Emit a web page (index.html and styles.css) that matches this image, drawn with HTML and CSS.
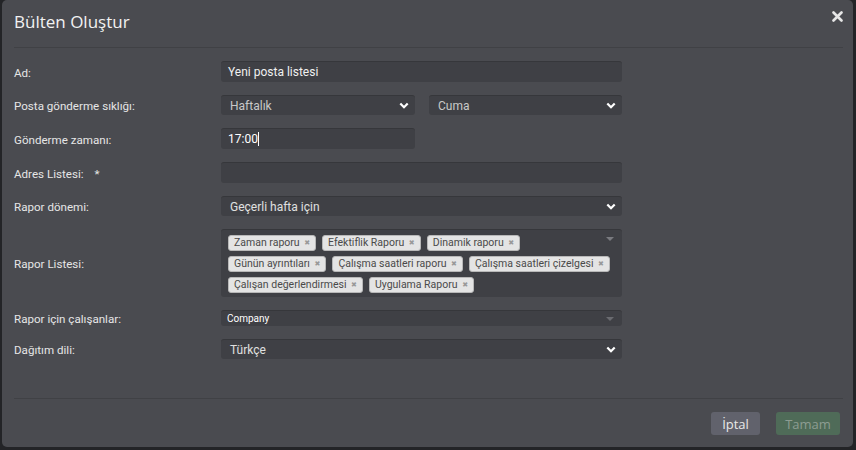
FILE: index.html
```html
<!DOCTYPE html>
<html lang="tr">
<head>
<meta charset="utf-8">
<title>Bülten Oluştur</title>
<link rel="stylesheet" href="styles.css">
</head>
<body>
<div class="modal">
  <div class="header">
    <h1 class="title">Bülten Oluştur</h1>
    <button class="close" aria-label="Kapat">
      <svg width="11" height="11" viewBox="0 0 11 11"><path d="M1.5 1.5L9.5 9.5M9.5 1.5L1.5 9.5" stroke="#e6e6e6" stroke-width="2.6" stroke-linecap="round"/></svg>
    </button>
  </div>
  <div class="body">
    <div class="row">
      <label class="label">Ad:</label>
      <div class="control input">Yeni posta listesi</div>
    </div>
    <div class="row">
      <label class="label">Posta gönderme sıklığı:</label>
      <div class="split">
        <div class="control select dim"><span>Haftalık</span><svg class="chev" width="10" height="7" viewBox="0 0 10 7"><path d="M1.3 1.5L5 5.2L8.7 1.5" fill="none" stroke="#fff" stroke-width="2.2"/></svg></div>
        <div class="control select dim"><span>Cuma</span><svg class="chev" width="10" height="7" viewBox="0 0 10 7"><path d="M1.3 1.5L5 5.2L8.7 1.5" fill="none" stroke="#fff" stroke-width="2.2"/></svg></div>
      </div>
    </div>
    <div class="row">
      <label class="label">Gönderme zamanı:</label>
      <div class="half"><div class="control input time">17:00<span class="caret"></span></div></div>
    </div>
    <div class="row">
      <label class="label">Adres Listesi: <span class="req">*</span></label>
      <div class="control input"></div>
    </div>
    <div class="row">
      <label class="label">Rapor dönemi:</label>
      <div class="control select"><span>Geçerli hafta için</span><svg class="chev" width="10" height="7" viewBox="0 0 10 7"><path d="M1.3 1.5L5 5.2L8.7 1.5" fill="none" stroke="#fff" stroke-width="2.2"/></svg></div>
    </div>
    <div class="row">
      <label class="label">Rapor Listesi:</label>
      <div class="control tags">
        <span class="tag">Zaman raporu <i>✖</i></span>
        <span class="tag">Efektiflik Raporu <i>✖</i></span>
        <span class="tag">Dinamik raporu <i>✖</i></span>
        <span class="tag">Günün ayrıntıları <i>✖</i></span>
        <span class="tag">Çalışma saatleri raporu <i>✖</i></span>
        <span class="tag">Çalışma saatleri çizelgesi <i>✖</i></span>
        <span class="tag">Çalışan değerlendirmesi <i>✖</i></span>
        <span class="tag">Uygulama Raporu <i>✖</i></span>
        <span class="tri"></span>
      </div>
    </div>
    <div class="row">
      <label class="label">Rapor için çalışanlar:</label>
      <div class="control small"><span>Company</span><span class="tri small-tri"></span></div>
    </div>
    <div class="row">
      <label class="label">Dağıtım dili:</label>
      <div class="control select"><span>Türkçe</span><svg class="chev" width="10" height="7" viewBox="0 0 10 7"><path d="M1.3 1.5L5 5.2L8.7 1.5" fill="none" stroke="#fff" stroke-width="2.2"/></svg></div>
    </div>
  </div>
  <div class="footer">
    <button class="btn cancel">İptal</button>
    <button class="btn ok">Tamam</button>
  </div>
</div>
</body>
</html>
```
FILE: styles.css
```css
html, body {
  margin: 0;
  padding: 0;
  background: #232427;
  width: 856px;
  height: 450px;
  overflow: hidden;
}
.modal {
  margin-left: 2px;
  width: 851px;
  height: 447px;
  background: #4a4b50;
  border-radius: 5px;
  display: flex;
  flex-direction: column;
  font-family: Roboto, "Liberation Sans", sans-serif;
  color: #e8e8e8;
}
.header {
  margin: 0 10px 0 12px;
  height: 47px;
  border-bottom: 1px solid #404145;
  display: flex;
  align-items: center;
  justify-content: space-between;
}
.title {
  margin: 0;
  font-family: "Open Sans", "Noto Sans", sans-serif;
  font-weight: 400;
  font-size: 17px;
  color: #f2f2f2;
  position: relative;
  top: -2px;
}
.close {
  background: none;
  border: 0;
  padding: 0;
  width: 11px;
  height: 11px;
  position: relative;
  top: -7px;
  display: flex;
}
.body {
  padding: 13px 0 0 12px;
  display: flex;
  flex-direction: column;
  gap: 13px;
  flex: 1;
}
.row {
  display: grid;
  grid-template-columns: 207px 401px;
  align-items: center;
}
.label {
  font-size: 11.6px;
  color: #e6e6e6;
  position: relative;
  top: 1px;
}
.req {
  margin-left: 8px;
}
.control {
  box-sizing: border-box;
  height: 21px;
  background: #3f4045;
  border-top: 1px solid #36373b;
  border-radius: 3px;
  display: flex;
  align-items: center;
  font-size: 12px;
  color: #f0f0f0;
  position: relative;
}
.input {
  padding-left: 7px;
}
.select {
  height: 20px;
  padding: 0 6px 0 9px;
  justify-content: space-between;
  color: #e0e0e0;
}
.select.dim {
  color: #c9c9c9;
}
.chev {
  display: block;
}
.split {
  display: grid;
  grid-template-columns: 194px 193px;
  column-gap: 14px;
}
.half {
  display: grid;
  grid-template-columns: 194px;
}
.time {
  color: #fff;
}
.caret {
  display: inline-block;
  width: 1px;
  height: 14px;
  background: #fff;
}
.tags {
  height: 68px;
  padding: 5px 8px 5px 7px;
  display: flex;
  flex-wrap: wrap;
  align-items: flex-start;
  align-content: flex-start;
  gap: 5px 6px;
}
.tag {
  box-sizing: border-box;
  height: 16px;
  padding: 0 5px 0 5px;
  background: #e4e4e4;
  border: 1px solid #b8b8b8;
  border-radius: 3px;
  font-size: 10.5px;
  line-height: 14px;
  color: #4a4a4a;
  white-space: nowrap;
}
.tag i {
  font-style: normal;
  font-family: "DejaVu Sans", sans-serif;
  font-size: 7px;
  color: #999;
  margin-left: 2px;
  position: relative;
  top: -1px;
}
.tri {
  position: absolute;
  right: 8px;
  top: 7px;
  width: 0;
  height: 0;
  border-left: 4px solid transparent;
  border-right: 4px solid transparent;
  border-top: 4px solid #7a7b80;
}
.small {
  height: 16px;
  padding-left: 6px;
  font-size: 10px;
  color: #fff;
}
.small-tri {
  top: 6px;
  border-top-color: #6a6b70;
}
.footer {
  box-sizing: border-box;
  margin: 0 10px 0 12px;
  border-top: 1px solid #404145;
  height: 49px;
  display: flex;
  justify-content: flex-end;
  align-items: flex-start;
  padding-top: 13px;
  padding-right: 3px;
  gap: 16px;
}
.btn {
  height: 23px;
  border: 0;
  border-radius: 3px;
  font-family: "Open Sans", "Noto Sans", sans-serif;
  font-size: 13px;
  padding: 0;
}
.cancel {
  width: 49px;
  background: #61626c;
  color: #e8e8e8;
}
.ok {
  width: 64px;
  background: #4f6b58;
  color: #8d9d92;
}
```
